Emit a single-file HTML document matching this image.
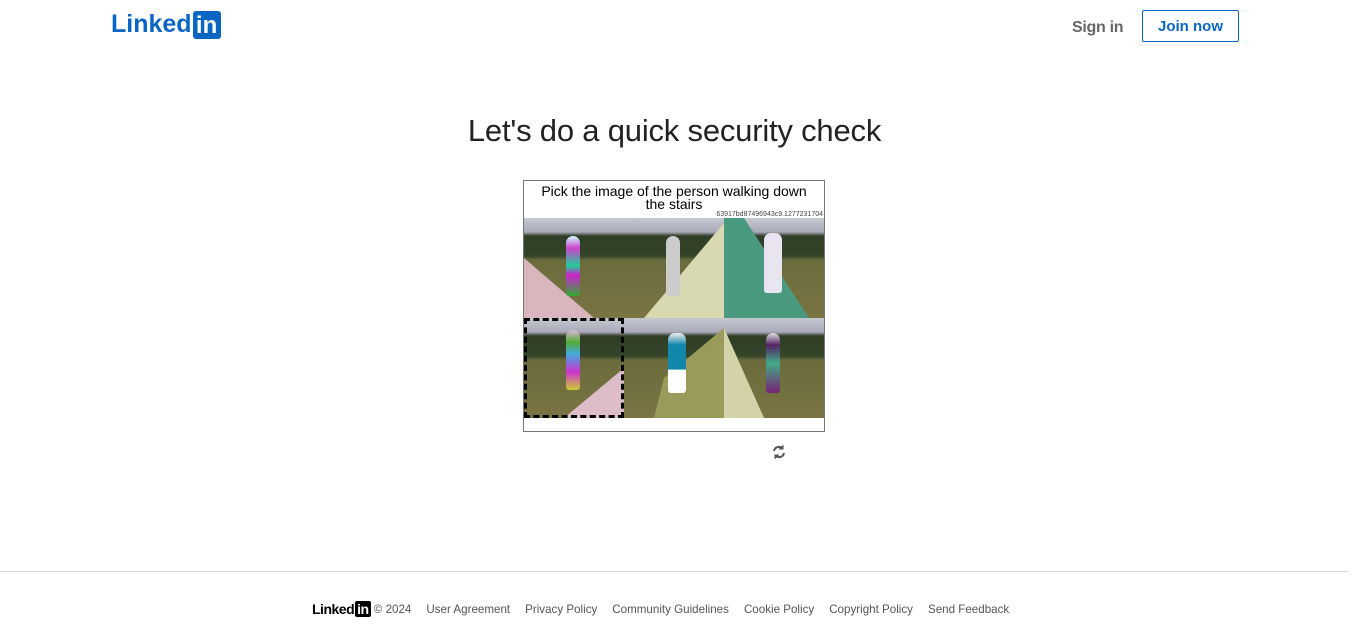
<!DOCTYPE html>
<html><head><meta charset="utf-8"><style>
*{margin:0;padding:0;box-sizing:border-box}
body{width:1366px;height:643px;background:#fff;font-family:"Liberation Sans",sans-serif;position:relative;overflow:hidden}
.logo{position:absolute;left:111px;top:10px;font-weight:bold;color:#0a66c2;font-size:25px;letter-spacing:0;display:flex;align-items:center}
.logo .in{display:inline-block;background:#0a66c2;color:#fff;border-radius:3px;width:28px;height:28px;text-align:center;line-height:30px;margin-left:1px;font-size:24px}
.signin{position:absolute;left:1072px;top:19px;font-size:16px;color:#666;font-weight:bold;letter-spacing:-0.3px}
.join{position:absolute;left:1142px;top:10px;width:97px;height:32px;border:1px solid #0a66c2;border-radius:2px;color:#0a66c2;font-size:15px;font-weight:bold;text-align:center;line-height:32px}
h1{position:absolute;top:113px;left:0;width:1349px;text-align:center;font-weight:normal;font-size:31px;color:#222;letter-spacing:-0.2px}
.box{position:absolute;left:523px;top:180px;width:302px;height:252px;border:1px solid #777}
.q{position:absolute;left:10px;top:4px;width:280px;text-align:center;font-size:14px;line-height:13px;color:#000}
.hash{position:absolute;right:1px;top:30px;font-size:7px;color:#444}
.t{position:absolute;width:100px;height:100px;overflow:hidden;background:linear-gradient(#c4c9cf 0,#aab 14%,#2f3d26 18%,#34452a 38%,#6a6b3c 42%,#7a7443 100%)}
.st{position:absolute;inset:0}
.fig{position:absolute;width:14px;height:60px;border-radius:7px 7px 3px 3px}
.sel{position:absolute;left:524px;top:318px;width:100px;height:100px;border:3px dashed #000}
.foot{position:absolute;top:571px;left:0;width:1349px;border-top:1px solid #ddd}
.fl{position:absolute;top:601px;left:312px;font-size:11.6px;color:#555;display:flex;align-items:center;white-space:nowrap}
.fl b{color:#000;font-size:14px;letter-spacing:-0.5px}
.fl b i{font-style:normal;background:#000;color:#fff;border-radius:2px;padding:0 2px;margin-left:1px}
.fl span{margin-left:15px}
</style></head><body>
<div class="logo">Linked<span class="in">in</span></div>
<div class="signin">Sign in</div>
<div class="join">Join now</div>
<h1>Let's do a quick security check</h1>
<div class="box">
<div class="q">Pick the image of the person walking down the stairs</div>
<div class="hash">63917bd87496943c9.1277231704</div>
</div>
<div class="t" style="left:524px;top:218px"><div class="st" style="background:#d9b5bd;clip-path:polygon(0 40%,70% 100%,0 100%)"></div><div class="fig" style="left:42px;top:18px;background:linear-gradient(#cff 0,#c4c 20%,#2c9 50%,#c2c 65%,#3a3 100%)"></div></div>
<div class="t" style="left:624px;top:218px"><div class="st" style="background:#d8d9b0;clip-path:polygon(100% 5%,100% 100%,20% 100%)"></div><div class="fig" style="left:42px;top:18px;background:#ccc"></div></div>
<div class="t" style="left:724px;top:218px"><div class="st" style="background:#4a9a80;clip-path:polygon(0 0,20% 0,85% 100%,0 100%)"></div><div class="fig" style="left:40px;top:15px;width:18px;background:#e8e4f0"></div></div>
<div class="t" style="left:524px;top:318px"><div class="st" style="background:#dcbdc8;clip-path:polygon(100% 50%,100% 100%,40% 100%)"></div><div class="fig" style="left:42px;top:12px;background:linear-gradient(#dbd 0,#5a3 20%,#4ad 40%,#c3c 70%,#cc3 100%)"></div></div>
<div class="t" style="left:624px;top:318px"><div class="st" style="background:#9a9a5a;clip-path:polygon(40% 60%,100% 10%,100% 100%,30% 100%)"></div><div class="fig" style="left:44px;top:15px;width:18px;background:linear-gradient(#eee 0,#18a 20%,#18a 60%,#fff 62%)"></div></div>
<div class="t" style="left:724px;top:318px"><div class="st" style="background:#d4d2a8;clip-path:polygon(0 10%,40% 100%,0 100%)"></div><div class="fig" style="left:42px;top:15px;background:linear-gradient(#ddd 0,#526 20%,#4a8 50%,#727 100%)"></div></div>
<div class="sel"></div>
<svg style="position:absolute;left:771px;top:444px" width="16" height="16" viewBox="0 0 16 16" fill="none" stroke="#555" stroke-width="2"><path d="M3 7a5 5 0 0 1 9-2"/><path d="M13 9a5 5 0 0 1-9 2"/><path d="M12 1v4h-4" fill="#555" stroke-width="1"/><path d="M4 15v-4h4" fill="#555" stroke-width="1"/></svg>
<div class="foot"></div>
<div class="fl"><b>Linked<i>in</i></b>&nbsp;© 2024<span>User Agreement</span><span>Privacy Policy</span><span>Community Guidelines</span><span>Cookie Policy</span><span>Copyright Policy</span><span>Send Feedback</span></div>
</body></html>
